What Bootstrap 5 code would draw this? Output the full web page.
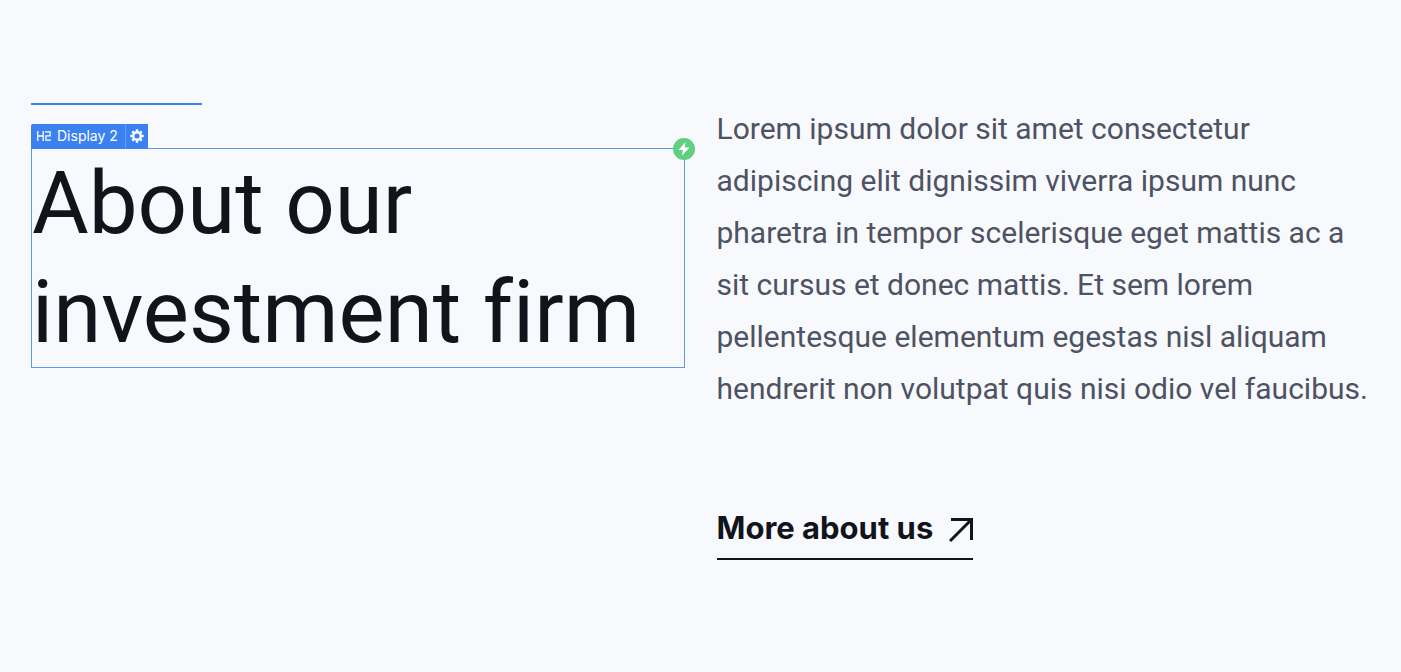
<!DOCTYPE html>
<html lang="en">
<head>
<meta charset="utf-8">
<meta name="viewport" content="width=device-width, initial-scale=1">
<title>About our investment firm</title>
<link href="https://cdn.jsdelivr.net/npm/bootstrap@5.3.0/dist/css/bootstrap.min.css" rel="stylesheet">
<style>
body { background: #f7f9fd; color: #11141b; font-family: Roboto, "Open Sans", sans-serif; }
.about { padding: 103px 31px; }
.about-row { --bs-gutter-x: 32px; }
.accent { width: 171px; height: 2px; background: #3b82f0; }
.selected { margin-top: 43px; border: 1px solid #5c97f2; }
.display-title { font-size: 87px; line-height: 109px; font-weight: 400; font-variant-ligatures: none; margin: 0; }
.element-tag { bottom: 100%; left: -1px; height: 25px; background: #3b82f0; color: #fff; font-size: 14px; border-radius: 2px 0 0 0; }
.tag-name { padding: 0 7px 2px 6px; gap: 6px; font-family: Inter, sans-serif; }
.tag-gear { width: 23px; border: 0; border-left: 1px solid #659df4; background: none; color: #fff; padding: 0 0 2px; }
.bolt { top: -11px; right: -11px; width: 22px; height: 22px; background: #5fcf80; border: 0; padding: 0; }
.intro { font-size: 30px; line-height: 52px; color: #4d5362; margin: 0; }
.more-link { margin-top: 93px; padding-bottom: 10px; gap: 16px; font-family: Inter, sans-serif; font-size: 31px; line-height: 40px; font-weight: 700; color: #11141b; border-bottom: 2px solid #11141b; }
.more-link svg { margin-top: 4px; }
</style>
</head>
<body>
<main class="container-fluid about">
<div class="row about-row">
<section class="col-6">
<div class="accent"></div>
<div class="selected position-relative">
<h2 class="display-title">About our<br>investment firm</h2>
<div class="element-tag position-absolute d-flex text-nowrap">
<div class="tag-name d-flex align-items-center">
<svg width="14" height="10" viewBox="0 0 14 10" fill="none" stroke="currentColor" stroke-width="1.3" aria-label="Heading level 2" role="img"><path d="M.8 0v10M6.2 0v10M.8 5h5.4M8 .8h5.1v4H8.9v4.4h5"/></svg>
<span>Display 2</span>
</div>
<button class="tag-gear d-flex align-items-center justify-content-center" type="button" aria-label="Settings">
<svg width="14" height="14" viewBox="0 0 14 14" fill="none" stroke="currentColor"><circle cx="7" cy="7" r="3.8" stroke-width="2.4"/><path stroke-width="2.4" d="M7 .3v2.2M7 11.5v2.2M.3 7h2.2M11.5 7h2.2M2.3 2.3l1.5 1.5M10.2 10.2l1.5 1.5M2.3 11.7l1.5-1.5M10.2 3.8l1.5-1.5"/></svg>
</button>
</div>
<button class="bolt position-absolute rounded-circle d-flex align-items-center justify-content-center" type="button" aria-label="Interactions">
<svg width="22" height="22" viewBox="0 0 22 22" fill="#fff"><path d="M12.4 4 5.6 12h4.2l-.8 5.8L16.4 9.400h-4.600z"/></svg>
</button>
</div>
</section>
<section class="col-6">
<p class="intro">Lorem ipsum dolor sit amet consectetur<br>adipiscing elit dignissim viverra ipsum nunc<br>pharetra in tempor scelerisque eget mattis ac a<br>sit cursus et donec mattis. Et sem lorem<br>pellentesque elementum egestas nisl aliquam<br>hendrerit non volutpat quis nisi odio vel faucibus.</p>
<a class="more-link d-inline-flex align-items-center text-decoration-none" href="#">More about us
<svg width="24" height="24" viewBox="0 0 24 24" fill="none" stroke="currentColor" stroke-width="3" aria-hidden="true"><path d="M2 1.500h20.500V22M22 2 1 23"/></svg>
</a>
</section>
</div>
</main>
<script src="https://cdn.jsdelivr.net/npm/bootstrap@5.3.0/dist/js/bootstrap.bundle.min.js"></script>
</body>
</html>
